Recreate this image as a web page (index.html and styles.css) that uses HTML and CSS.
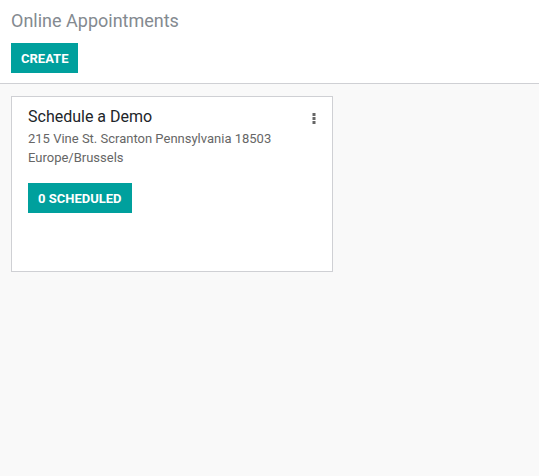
FILE: index.html
```html
<!DOCTYPE html>
<html lang="en">
<head>
    <meta charset="UTF-8">
    <title>Online Appointments</title>
    <link rel="stylesheet" href="styles.css">
</head>
<body>
    <div class="control-panel">
        <h1 class="breadcrumb">Online Appointments</h1>
        <button class="btn btn-primary">Create</button>
    </div>
    <div class="kanban-view">
        <div class="kanban-card">
            <div class="card-top">
                <h2 class="card-title">Schedule a Demo</h2>
                <span class="card-menu">
                    <svg width="4" height="11" viewBox="0 0 4 11"><rect x="0.5" y="0" width="3" height="3" fill="#666"/><rect x="0.5" y="4" width="3" height="3" fill="#666"/><rect x="0.5" y="8" width="3" height="3" fill="#666"/></svg>
                </span>
            </div>
            <div class="card-info">215 Vine St. Scranton Pennsylvania 18503</div>
            <div class="card-info">Europe/Brussels</div>
            <button class="btn btn-primary card-btn">0 Scheduled</button>
        </div>
    </div>
</body>
</html>
```

FILE: styles.css
```css
:root {
    --primary-color: #00a09d;
    --border-color: #cfd0d4;
    --background-color: #f9f9f9;
}

body {
    margin: 0;
    font-family: Roboto, 'Noto Sans', sans-serif;
    background-color: var(--background-color);
    color: #212529;
    height: 476px;
}

.control-panel {
    background-color: #ffffff;
    border-bottom: 1px solid var(--border-color);
    padding: 11px 11px 10px;
    height: 62px;
}

.breadcrumb {
    margin: 0 0 12px;
    font-size: 18px;
    font-weight: 400;
    line-height: 20px;
    color: #848a90;
}

.btn {
    border: none;
    background-color: var(--primary-color);
    color: #ffffff;
    font-family: Roboto, sans-serif;
    font-size: 13px;
    font-weight: 700;
    text-transform: uppercase;
    padding: 0 10px;
    height: 30px;
    cursor: pointer;
}

.kanban-view {
    padding: 12px 11px;
}

.kanban-card {
    width: 288px;
    height: 143px;
    background-color: #ffffff;
    border: 1px solid var(--border-color);
    padding: 10px 16px 21px;
}

.card-top {
    display: flex;
    justify-content: space-between;
    align-items: flex-start;
}

.card-title {
    margin: 0 0 2px;
    font-size: 16px;
    font-weight: 400;
    line-height: 20px;
    color: #212529;
}

.card-menu {
    padding-top: 2px;
}

.card-info {
    font-size: 13px;
    line-height: 19px;
    color: #666666;
}

.card-btn {
    margin-top: 16px;
    padding: 0 10px;
    height: 30px;
}
```
